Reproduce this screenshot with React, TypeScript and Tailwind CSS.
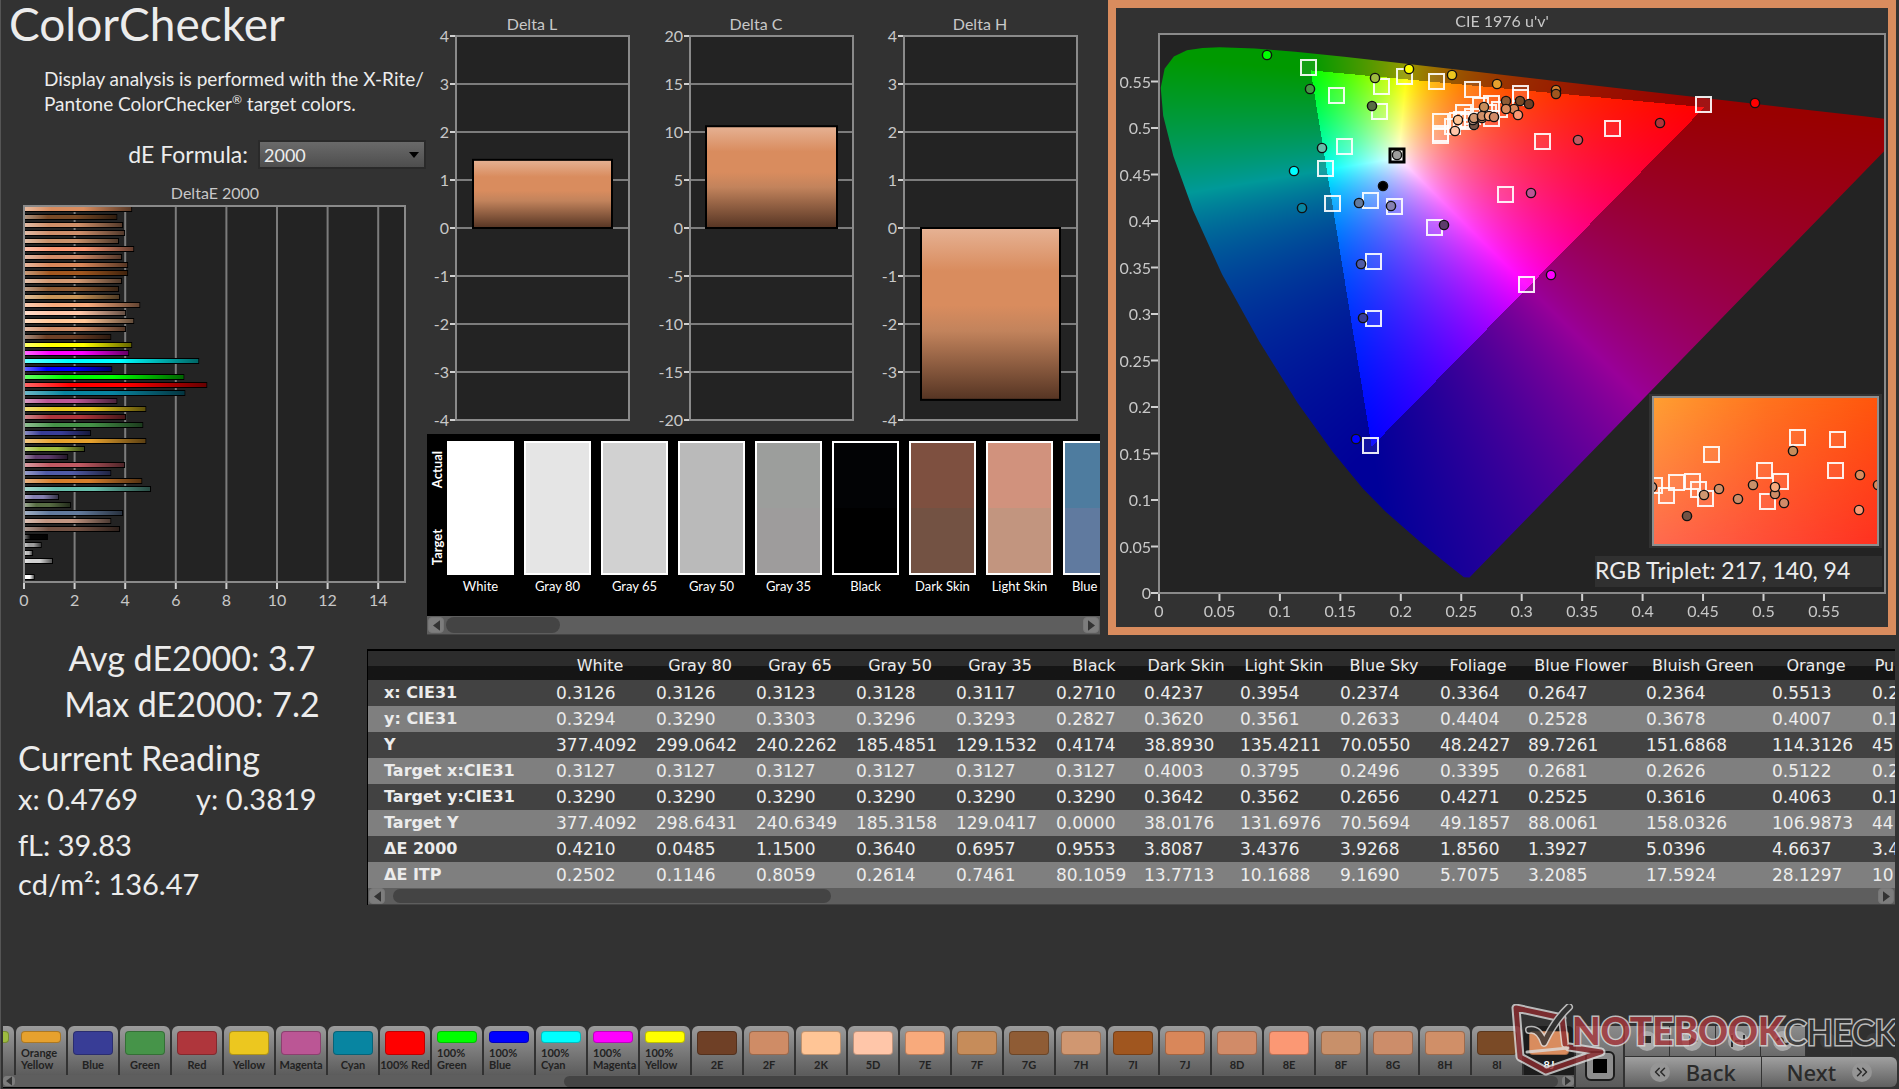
import { useEffect, useRef } from "react";
import { ChevronsLeft, ChevronsRight } from "lucide-react";

const ACCENT = "#d98c5e";

/* ---------- data ---------- */

// top row first
const deltaE: [string, number][] = [
  ["#d98c5e", 4.29], ["#7a4a26", 3.7], ["#d08f68", 3.93], ["#cc8d6a", 4.01], ["#c8906a", 3.77],
  ["#fb9874", 4.37], ["#d18b68", 3.89], ["#d9875a", 4.13], ["#a0561f", 4.13], ["#d09771", 3.89],
  ["#8f5c35", 3.77], ["#c89458", 3.81], ["#f8aa7c", 4.61], ["#ffc6a9", 4.05], ["#ffc596", 4.37],
  ["#cf8c66", 4.05], ["#6f4026", 3.46], ["#ffff00", 4.29], ["#ff00ff", 4.17], ["#00ffff", 6.95],
  ["#0000ff", 3.5], ["#00ff00", 6.36], ["#ff0000", 7.27], ["#0885a1", 6.4], ["#bb5695", 3.7],
  ["#e7c71f", 4.85], ["#af363c", 4.05], ["#469449", 4.73], ["#383d96", 2.66], ["#e6a12e", 4.85],
  ["#9ebc40", 2.42], ["#5e3c6c", 1.75], ["#c15a63", 4.01], ["#505ba6", 3.46], ["#d67e2c", 4.69],
  ["#67bdaa", 5.04], ["#8580b1", 1.39], ["#576c43", 1.86], ["#627a9d", 3.93], ["#c29682", 3.46],
  ["#735244", 3.81], ["#050505", 0.95], ["#9e9e9e", 0.7], ["#bababa", 0.36], ["#d1d1d1", 1.15],
  ["#e5e5e5", 0], ["#ffffff", 0.42],
];

const patches = [
  { name: "White", actual: "#ffffff", target: "#ffffff" },
  { name: "Gray 80", actual: "#e5e5e5", target: "#e5e5e5" },
  { name: "Gray 65", actual: "#d1d1d1", target: "#d1d1d1" },
  { name: "Gray 50", actual: "#bababa", target: "#bababa" },
  { name: "Gray 35", actual: "#9c9e9c", target: "#9e9c9c" },
  { name: "Black", actual: "#020305", target: "#000000" },
  { name: "Dark Skin", actual: "#7e5040", target: "#735243" },
  { name: "Light Skin", actual: "#d1927d", target: "#c2957f" },
  { name: "Blue Sky", actual: "#4e7c9f", target: "#607a9f" },
];

const columns = ["White", "Gray 80", "Gray 65", "Gray 50", "Gray 35", "Black", "Dark Skin", "Light Skin", "Blue Sky", "Foliage", "Blue Flower", "Bluish Green", "Orange", "Purple"];
const columnWidths = [182, 100, 100, 100, 100, 100, 88, 96, 100, 100, 88, 118, 126, 100, 68];

const rows: [string, string[]][] = [
  ["x: CIE31", ["0.3126", "0.3126", "0.3123", "0.3128", "0.3117", "0.2710", "0.4237", "0.3954", "0.2374", "0.3364", "0.2647", "0.2364", "0.5513", "0.2"]],
  ["y: CIE31", ["0.3294", "0.3290", "0.3303", "0.3296", "0.3293", "0.2827", "0.3620", "0.3561", "0.2633", "0.4404", "0.2528", "0.3678", "0.4007", "0.1"]],
  ["Y", ["377.4092", "299.0642", "240.2262", "185.4851", "129.1532", "0.4174", "38.8930", "135.4211", "70.0550", "48.2427", "89.7261", "151.6868", "114.3126", "45"]],
  ["Target x:CIE31", ["0.3127", "0.3127", "0.3127", "0.3127", "0.3127", "0.3127", "0.4003", "0.3795", "0.2496", "0.3395", "0.2681", "0.2626", "0.5122", "0.2"]],
  ["Target y:CIE31", ["0.3290", "0.3290", "0.3290", "0.3290", "0.3290", "0.3290", "0.3642", "0.3562", "0.2656", "0.4271", "0.2525", "0.3616", "0.4063", "0.1"]],
  ["Target Y", ["377.4092", "298.6431", "240.6349", "185.3158", "129.0417", "0.0000", "38.0176", "131.6976", "70.5694", "49.1857", "88.0061", "158.0326", "106.9873", "44"]],
  ["ΔE 2000", ["0.4210", "0.0485", "1.1500", "0.3640", "0.6957", "0.9553", "3.8087", "3.4376", "3.9268", "1.8560", "1.3927", "5.0396", "4.6637", "3.4"]],
  ["ΔE ITP", ["0.2502", "0.1146", "0.8059", "0.2614", "0.7461", "80.1059", "13.7713", "10.1688", "9.1690", "5.7075", "3.2085", "17.5924", "28.1297", "10"]],
];

const tiles: [string, string][] = [
  ["Yellow Green", "#9ebc40"], ["Orange Yellow", "#e6a12e"], ["Blue", "#383d96"], ["Green", "#469449"],
  ["Red", "#af363c"], ["Yellow", "#ecc71f"], ["Magenta", "#bb5695"], ["Cyan", "#0885a1"],
  ["100% Red", "#ff0000"], ["100% Green", "#00ff00"], ["100% Blue", "#0000ff"], ["100% Cyan", "#00ffff"],
  ["100% Magenta", "#ff00ff"], ["100% Yellow", "#ffff00"], ["2E", "#6f4026"], ["2F", "#cf8c66"],
  ["2K", "#ffc596"], ["5D", "#ffc6a9"], ["7E", "#f8aa7c"], ["7F", "#c68c5a"], ["7G", "#8f5c35"],
  ["7H", "#d09771"], ["7I", "#a0561f"], ["7J", "#d9875a"], ["8D", "#d18b68"], ["8E", "#fb9874"],
  ["8F", "#c8906a"], ["8G", "#cc8d6a"], ["8H", "#d08f68"], ["8I", "#7a4a26"], ["8J", ACCENT],
];

// CIE 1931 spectral locus, xy
const locus: [number, number][] = [
  [0.1741, 0.005], [0.1714, 0.0051], [0.1644, 0.0109], [0.1566, 0.0177], [0.144, 0.0297],
  [0.1355, 0.0399], [0.1241, 0.0578], [0.1096, 0.0868], [0.0913, 0.1327], [0.0687, 0.2007],
  [0.0454, 0.295], [0.0235, 0.4127], [0.0082, 0.5384], [0.0039, 0.6548], [0.0139, 0.7502],
  [0.0389, 0.812], [0.0743, 0.8338], [0.1142, 0.8262], [0.1547, 0.8059], [0.2296, 0.7543],
  [0.3016, 0.6923], [0.3731, 0.6245], [0.4441, 0.5547], [0.5125, 0.4866], [0.5752, 0.4242],
  [0.627, 0.3725], [0.6658, 0.334], [0.6915, 0.3083], [0.719, 0.2809], [0.7347, 0.2653],
];

const targets: [number, number][] = [
  [1308, 68], [1336, 96], [1381, 87], [1379, 112], [1404, 77], [1436, 82], [1472, 90], [1344, 147],
  [1325, 169], [1332, 204], [1370, 201], [1394, 207], [1434, 228], [1373, 262], [1373, 319],
  [1505, 195], [1526, 285], [1440, 122], [1440, 134], [1440, 136], [1452, 127], [1457, 121],
  [1463, 113], [1461, 120], [1468, 122], [1472, 117], [1480, 106], [1491, 104], [1491, 119],
  [1488, 113], [1499, 110], [1520, 94], [1520, 98], [1542, 142], [1612, 129], [1703, 105], [1370, 446],
];

const measured: [number, number, string][] = [
  [1267, 56, "#00ff00"], [1310, 90, "#469646"], [1375, 79, "#9ebc40"], [1372, 107, "#576c43"],
  [1409, 70, "#ffff00"], [1452, 76, "#ecc71f"], [1497, 85, "#e6a12e"], [1322, 149, "#67bdaa"],
  [1294, 172, "#00ffff"], [1302, 209, "#0885a1"], [1383, 187, "#000000"], [1359, 204, "#627a9d"],
  [1391, 207, "#8580b1"], [1444, 226, "#5e3c6c"], [1361, 265, "#505ba6"], [1363, 319, "#383d96"],
  [1397, 156, "#9e9e9e"], [1556, 91, "#d67e2c"], [1556, 95, "#a0561f"], [1755, 104, "#ff0000"],
  [1660, 124, "#af363c"], [1578, 141, "#c15a63"], [1531, 194, "#bb5695"], [1551, 276, "#ff00ff"],
  [1356, 440, "#0000ff"], [1506, 102, "#8f5c35"], [1520, 102, "#7a4a26"], [1529, 105, "#6f4026"],
  [1514, 110, "#d9875a"], [1506, 110, "#d98c5e"], [1518, 116, "#fb9874"], [1484, 108, "#c68c5a"],
  [1474, 126, "#735244"], [1473, 121, "#c29682"], [1474, 119, "#d09771"], [1458, 121, "#ffc596"],
  [1455, 132, "#ffc6a9"], [1482, 119, "#c8906a"], [1482, 117, "#d08f68"], [1489, 117, "#f8aa7c"],
  [1494, 118, "#d18b68"],
];

const insetTargets: [number, number][] = [
  [1797, 438], [1837, 440], [1711, 455], [1764, 471], [1835, 471], [1780, 482], [1767, 502],
  [1676, 483], [1692, 482], [1698, 490], [1666, 496], [1705, 499], [1654, 486],
];

const insetMeasured: [number, number, string][] = [
  [1793, 452, "#c68c5a"], [1860, 476, "#d98c5e"], [1753, 486, "#c8906a"], [1775, 495, "#cf8c66"],
  [1775, 488, "#f8aa7c"], [1738, 500, "#cc8d6a"], [1784, 504, "#d18b68"], [1719, 490, "#d08f68"],
  [1704, 496, "#d09771"], [1687, 517, "#735244"], [1859, 511, "#fb9874"], [1878, 486, "#d9875a"],
  [1652, 488, "#c29682"],
];

/* ---------- small parts ---------- */

const arrowBtn =
  "flex h-[16px] w-[16px] shrink-0 items-center justify-center rounded-sm border border-[#777] bg-[#7d7d7d] text-[#333]";

function ScrollBar({ lead, thumb, height }: { lead: string; thumb: string; height: string }) {
  return (
    <div className={`flex items-center border-b border-[#444] bg-[#5e5e5e] px-px ${height}`}>
      <button aria-label="Scroll left" className={arrowBtn}>
        <svg viewBox="0 0 8 12" className="h-[11px] w-[7px]"><path d="M8 0V12L0 6Z" fill="currentColor" /></svg>
      </button>
      <div className="flex h-full flex-1 py-px">
        <div className={lead} />
        <div className={`rounded-lg bg-[#444] ${thumb}`} />
      </div>
      <button aria-label="Scroll right" className={arrowBtn}>
        <svg viewBox="0 0 8 12" className="h-[11px] w-[7px]"><path d="M0 0V12L8 6Z" fill="currentColor" /></svg>
      </button>
    </div>
  );
}

function DeltaEChart() {
  return (
    <svg viewBox="0 0 427 450" className="block w-full text-base">
      <text x="215" y="30" textAnchor="middle" fill="#c8c8c8">DeltaE 2000</text>
      <rect x="24" y="37" width="381" height="376" fill="#232323" />
      {[2, 4, 6, 8, 10, 12, 14].map((t) => (
        <path key={t} d={`M${24 + t * 25.3} 37V413`} stroke="#7c7c7c" strokeWidth="2" />
      ))}
      {deltaE.map(([color, value], i) => (
        <g key={i}>
          <defs>
            <linearGradient id={`bar${i}`}>
              <stop offset="0" stopColor="#fff" stopOpacity=".4" />
              <stop offset=".25" stopColor="#fff" stopOpacity="0" />
              <stop offset=".55" stopColor="#000" stopOpacity="0" />
              <stop offset="1" stopColor="#000" stopOpacity=".6" />
            </linearGradient>
          </defs>
          {value > 0 && (
            <>
              <rect x="24" y={37 + i * 8} width={value * 25.2} height="6" fill="#000" />
              <rect x="25" y={38 + i * 8} width={value * 25.2 - 2} height="4" fill={color} />
              <rect x="25" y={38 + i * 8} width={value * 25.2 - 2} height="4" fill={`url(#bar${i})`} />
            </>
          )}
        </g>
      ))}
      <rect x="24" y="37" width="381" height="376" fill="none" stroke="#8a8a8a" strokeWidth="2" />
      {[0, 2, 4, 6, 8, 10, 12, 14].map((t) => (
        <g key={t}>
          <path d={`M${24 + t * 25.3} 414V420`} stroke="#d0d0d0" strokeWidth="2" />
          <text x={24 + t * 25.3} y="437" textAnchor="middle" fill="#c8c8c8">{t}</text>
        </g>
      ))}
    </svg>
  );
}

function DeltaChart({ name, value, max, axis }: { name: string; value: number; max: number; axis: number }) {
  const step = max / 4;
  const zero = 228;
  const size = (Math.abs(value) / step) * 48;
  const top = value > 0 ? zero - size : zero;
  const width = 195 - axis;
  const inset = Math.round(width * 0.1);
  return (
    <svg viewBox="0 0 196 434" className="block min-w-0 flex-1 text-base">
      <defs>
        <linearGradient id={`delta${max}${axis}`} x1="0" y1="0" x2="0" y2="1">
          <stop offset="0" stopColor="#e6b294" />
          <stop offset=".25" stopColor={ACCENT} />
          <stop offset=".45" stopColor={ACCENT} />
          <stop offset=".6" stopColor="#c2835c" />
          <stop offset="1" stopColor="#553423" />
        </linearGradient>
      </defs>
      <text x="98" y="30" textAnchor="middle" fill="#c8c8c8">{name}</text>
      <rect x={axis} y="36" width={width} height="383" fill="#232323" />
      {[4, 3, 2, 1, 0, -1, -2, -3, -4].map((n, i) => (
        <g key={n}>
          <path d={`M${axis} ${36 + i * 48}H195`} stroke="#7c7c7c" strokeWidth="2" />
          <path d={`M${axis - 6} ${36 + i * 48}H${axis}`} stroke="#d0d0d0" strokeWidth="2" />
          <text x={axis - 7} y={42 + i * 48} textAnchor="end" fill="#c8c8c8">{n * step}</text>
        </g>
      ))}
      <rect x={axis} y="36" width={width} height="384" fill="none" stroke="#8a8a8a" strokeWidth="2" />
      <rect x={axis + inset} y={top} width={width - inset * 2} height={size} fill={`url(#delta${max}${axis})`} stroke="#000" strokeWidth="2" />
    </svg>
  );
}

/* ---------- chromaticity diagram ---------- */

const VIEW = { x: 1116, y: 9, w: 772, h: 619 };
const ORIGIN = { x: 1159, y: 594 };
const PER_U = 1209;
const PER_V = 930;

function paintGamut(canvas: HTMLCanvasElement) {
  const ctx = canvas.getContext("2d");
  if (!ctx) return;
  const img = ctx.createImageData(VIEW.w, VIEW.h);
  for (let py = 0; py < VIEW.h; py++) {
    for (let px = 0; px < VIEW.w; px++) {
      const u = (px + VIEW.x - ORIGIN.x) / PER_U;
      const v = (ORIGIN.y - py - VIEW.y) / PER_V;
      if (v <= 0.001) continue;
      const X = (9 * u) / (4 * v);
      const Z = (12 - 3 * u - 20 * v) / (4 * v);
      const rgb = [
        3.2406 * X - 1.5372 - 0.4986 * Z,
        -0.9689 * X + 1.8758 + 0.0415 * Z,
        0.0557 * X - 0.204 + 1.057 * Z,
      ];
      // outside the triangle the colours are dimmed
      const dim = Math.min(...rgb) < 0 ? 0.6 : 1;
      const peak = Math.max(...rgb);
      const at = (py * VIEW.w + px) * 4;
      rgb.forEach((c, i) => {
        img.data[at + i] = (255 * dim * Math.max(c, 0)) / peak;
      });
      img.data[at + 3] = 255;
    }
  }
  ctx.putImageData(img, 0, 0);

  ctx.globalCompositeOperation = "destination-in";
  ctx.beginPath();
  locus.forEach(([x, y]) => {
    const d = -2 * x + 12 * y + 3;
    ctx.lineTo(ORIGIN.x - VIEW.x + ((4 * x) / d) * PER_U, ORIGIN.y - VIEW.y - ((9 * y) / d) * PER_V);
  });
  ctx.closePath();
  ctx.fill();

  ctx.globalCompositeOperation = "destination-over";
  ctx.fillStyle = "#232323";
  ctx.fillRect(43, 26, 726, 559);
  ctx.clearRect(769, 0, 3, VIEW.h);
}

function Square({ x, y }: { x: number; y: number }) {
  return <rect x={x - 7} y={y - 7} width="15" height="15" fill="#fff" fillOpacity=".08" stroke="#fff" strokeWidth="2" strokeOpacity=".9" />;
}

function Dot({ x, y, color }: { x: number; y: number; color: string }) {
  return <circle cx={x} cy={y} r="4.6" fill={color} stroke="#111" strokeWidth="1.4" />;
}

function CieDiagram() {
  const canvas = useRef<HTMLCanvasElement>(null);
  useEffect(() => {
    if (canvas.current) paintGamut(canvas.current);
  }, []);
  const ticks = [0, 0.05, 0.1, 0.15, 0.2, 0.25, 0.3, 0.35, 0.4, 0.45, 0.5, 0.55];

  return (
    <div className="relative border-8 border-[#d98c5e]">
      <canvas ref={canvas} width={VIEW.w} height={VIEW.h} className="block w-full" />
      <svg viewBox="1116 9 772 619" className="absolute inset-0 w-full text-base">
        <defs>
          <linearGradient id="insetTop">
            <stop offset="0" stopColor="#ffa032" />
            <stop offset=".5" stopColor="#ff741e" />
            <stop offset="1" stopColor="#ff560c" />
          </linearGradient>
          <linearGradient id="insetBottom">
            <stop offset="0" stopColor="#ff6a50" />
            <stop offset="1" stopColor="#ff3020" />
          </linearGradient>
          <linearGradient id="fade" x1="0" y1="0" x2="0" y2="1">
            <stop offset="0" stopColor="#000" />
            <stop offset="1" stopColor="#fff" />
          </linearGradient>
          <mask id="fadeMask"><rect x="1653" y="398" width="225" height="148" fill="url(#fade)" /></mask>
          <clipPath id="insetClip"><rect x="1653" y="398" width="225" height="148" /></clipPath>
        </defs>
        <text x="1502" y="28" textAnchor="middle" fill="#c8c8c8">CIE 1976 u'v'</text>
        <rect x="1159" y="35" width="726" height="559" fill="none" stroke="#8a8a8a" strokeWidth="2" />
        {ticks.map((t) => (
          <g key={t} fill="#c8c8c8">
            <path d={`M${ORIGIN.x + t * PER_U} 595V602`} stroke="#d0d0d0" strokeWidth="2" />
            <text x={ORIGIN.x + t * PER_U} y="618" textAnchor="middle">{t}</text>
            <path d={`M1151 ${ORIGIN.y - t * PER_V}H1158`} stroke="#d0d0d0" strokeWidth="2" />
            <text x="1151" y={ORIGIN.y + 6 - t * PER_V} textAnchor="end">{t}</text>
          </g>
        ))}
        {targets.map(([x, y], i) => <Square key={i} x={x} y={y} />)}
        <rect x="1390" y="150" width="14" height="13" fill="#fff" fillOpacity=".7" stroke="#000" strokeWidth="3" />
        {measured.map(([x, y, c], i) => <Dot key={i} x={x} y={y} color={c} />)}

        <rect x="1649" y="395" width="233" height="154" fill="#323232" />
        <rect x="1653" y="398" width="225" height="148" fill="url(#insetTop)" />
        <rect x="1653" y="398" width="225" height="148" fill="url(#insetBottom)" mask="url(#fadeMask)" />
        <g clipPath="url(#insetClip)">
          {insetTargets.map(([x, y], i) => <Square key={i} x={x} y={y} />)}
          {insetMeasured.map(([x, y, c], i) => <Dot key={i} x={x} y={y} color={c} />)}
        </g>
        <rect x="1653" y="398" width="225" height="148" fill="none" stroke="#8f8f8f" strokeWidth="2" />
        <rect x="1595" y="557" width="287" height="31" fill="#303030" />
        <text x="1595" y="580" fill="#ececec" className="text-[23px]">RGB Triplet: 217, 140, 94</text>
      </svg>
    </div>
  );
}

/* ---------- panels ---------- */

function PatchPanel() {
  return (
    <div className="flex flex-col">
      <div className="flex h-[182px] overflow-hidden bg-black pt-[7px] text-white">
        <div className="flex h-[134px] w-[20px] shrink-0 flex-col items-center justify-between py-[10px] pl-px text-[13px] font-bold leading-none">
          <span className="rotate-180 [writing-mode:vertical-rl]">Actual</span>
          <span className="rotate-180 [writing-mode:vertical-rl]">Target</span>
        </div>
        <div className="flex gap-[10px]">
          {patches.map((p) => (
            <figure key={p.name} className="w-[67px] shrink-0 text-center">
              <div className="flex h-[134px] flex-col border-2 border-white">
                <div className="flex-1" style={{ background: p.actual }} />
                <div className="flex-1" style={{ background: p.target }} />
              </div>
              <figcaption className="mt-[3px] whitespace-nowrap text-[13px] leading-4">{p.name}</figcaption>
            </figure>
          ))}
        </div>
      </div>
      <ScrollBar height="h-[19px]" lead="w-[2px]" thumb="w-[114px]" />
    </div>
  );
}

function Readings() {
  return (
    <section className="w-[366px] shrink-0 whitespace-nowrap text-[29px] leading-9">
      <div className="pl-4 text-center text-[34px] leading-[46px]">
        <p>Avg dE2000: 3.7</p>
        <p>Max dE2000: 7.2</p>
      </div>
      <div className="pl-[17px]">
        <h2 className="mt-2 text-[34px] leading-[46px]">Current Reading</h2>
        <p className="flex gap-[58px]">
          <span>x: 0.4769</span>
          <span>y: 0.3819</span>
        </p>
        <p className="mt-[10px]">fL: 39.83</p>
        <p className="mt-[3px]">cd/m²: 136.47</p>
      </div>
    </section>
  );
}

function ResultsTable() {
  return (
    <section className="mt-[14px] mr-1 min-w-0 flex-1 border-l border-t-2 border-black">
      <div className="overflow-hidden">
        <table className="w-[1566px] table-fixed border-collapse whitespace-nowrap font-['DejaVu_Sans',sans-serif] text-[17px]">
          <colgroup>
            {columnWidths.map((w, i) => <col key={i} style={{ width: w }} />)}
          </colgroup>
          <thead>
            <tr className="h-[29px] bg-linear-to-b from-[#2c2c2c] from-50% to-[#151515] to-50% text-[16px]">
              <td />
              {columns.map((c) => <th key={c} scope="col" className="p-0 font-normal">{c}</th>)}
            </tr>
          </thead>
          <tbody>
            {rows.map(([name, values]) => (
              <tr key={name} className="h-[26px] leading-6 odd:bg-[#424242] even:bg-[#7f7f7f]">
                <th scope="row" className="p-0 pl-4 text-left text-[16px] font-bold">{name}</th>
                {values.map((v, i) => <td key={i} className="p-0 pl-[6px]">{v}</td>)}
              </tr>
            ))}
          </tbody>
        </table>
      </div>
      <ScrollBar height="h-[17px]" lead="w-[8px]" thumb="w-[438px]" />
    </section>
  );
}

function Tile({ name, color, active }: { name: string; color: string; active: boolean }) {
  const two = name.includes(" ") && name !== "100% Red";
  return (
    <button
      className={`flex h-[49px] w-[50px] shrink-0 flex-col items-center justify-between rounded-t-md pb-1 pt-[5px] text-[11px] font-bold leading-3 ${
        active ? "bg-[#1c1c1c] text-white" : "bg-linear-to-b from-[#9c9c9c] to-[#5c5c5c] text-[#222]"
      }`}
    >
      <span className={`w-10 rounded-sm border border-black/25 ${two ? "h-3" : "h-6"}`} style={{ background: color }} />
      <span className={two ? "w-10 text-left" : "whitespace-nowrap"}>{name}</span>
    </button>
  );
}

function Watermark() {
  return (
    <svg viewBox="0 0 384 74" className="pointer-events-none absolute -top-[22px] left-[1510px] w-[384px] opacity-80" aria-label="Notebookcheck">
      <g strokeLinejoin="round" strokeLinecap="round" fill="none">
        <path d="M5 4L51 14 M5 4L9 53L35 67L90 48L58 43" stroke="#ddd" strokeWidth="9" />
        <path d="M51 14L54 40" stroke="#ddd" strokeWidth="8" />
        <path d="M5 4L51 14L54 40 M5 4L9 53L35 67L90 48L58 43" stroke="#8c2b2f" strokeWidth="5" />
        <path d="M18 26Q28 24 33 39Q44 16 58 3" stroke="#ddd" strokeWidth="8" />
        <path d="M18 26Q28 24 33 39Q44 16 58 3" stroke="#333" strokeWidth="5" />
        <path d="M16 48L57 44" stroke="#ddd" strokeWidth="3" />
      </g>
      <g stroke="#ddd" strokeWidth="3" paintOrder="stroke">
        <text x="61" y="41" className="text-[37px] font-black" fill="#a8383d">NOTEBOOK</text>
        <text x="273" y="41" className="text-[34px] font-medium" fill="#333">CHECK</text>
      </g>
    </svg>
  );
}

const deckBtn = "flex flex-1 items-center justify-center border-r border-[#333]";

function BottomBar() {
  return (
    <footer className="relative mt-auto flex h-[63px] gap-[2px] pl-[2px] pr-[2px]">
      <div className="min-w-0 flex-1 overflow-hidden">
        <div className="-ml-[39px] flex gap-[2px]">
          {tiles.map(([name, color], i) => (
            <Tile key={name} name={name} color={color} active={i === tiles.length - 1} />
          ))}
        </div>
        <div className="flex h-[13px] items-center border-b border-black bg-[#5e5e5e]">
          <button aria-label="Scroll left" className="flex w-3 justify-center rounded-sm bg-[#7d7d7d] text-[#333]">
            <svg viewBox="0 0 8 12" className="h-[10px] w-[6px]"><path d="M8 0V12L0 6Z" fill="currentColor" /></svg>
          </button>
          <div className="ml-auto h-[11px] w-[994px] rounded-md bg-[#444]" />
          <button aria-label="Scroll right" className="ml-1 flex w-3 justify-center rounded-sm bg-[#7d7d7d] text-[#333]">
            <svg viewBox="0 0 8 12" className="h-[10px] w-[6px]"><path d="M0 0V12L8 6Z" fill="currentColor" /></svg>
          </button>
        </div>
      </div>
      <button aria-label="Stop" className="flex h-[61px] w-[47px] items-end justify-center bg-linear-to-b from-[#8a8a8a] to-[#5a5a5a] pb-[6px]">
        <span className="flex h-[30px] w-[30px] items-center justify-center rounded-md border-2 border-[#1c1c1c] bg-[#8d8d8d]">
          <span className="h-[14px] w-[14px] bg-black" />
        </span>
      </button>
      <div className="flex h-[61px] w-[272px] flex-col gap-px text-[#2a2a2a]">
        <div className="flex h-[30px] bg-linear-to-b from-[#8c8c8c] to-[#6a6a6a]">
          <button aria-label="Halt" className={deckBtn}>
            <svg viewBox="0 0 20 20" className="h-5 w-5"><circle cx="10" cy="10" r="10" fill="#a8a8a8" /><path d="M6 5H14V12H6Z" fill="#2a2a2a" /></svg>
          </button>
          <button aria-label="Play" className={deckBtn}>
            <svg viewBox="0 0 20 20" className="h-5 w-5"><circle cx="10" cy="10" r="10" fill="#a8a8a8" /><path d="M7 5L16 10L7 15Z" fill="#2a2a2a" /></svg>
          </button>
          <button aria-label="Step" className={deckBtn}>
            <svg viewBox="0 0 20 20" className="h-5 w-5"><circle cx="10" cy="10" r="10" fill="#a8a8a8" /><path d="M4 4V16M16 4V16M7 10H13" stroke="#2a2a2a" strokeWidth="2" /></svg>
          </button>
          <button aria-label="Loop" className={deckBtn}>
            <svg viewBox="0 0 20 20" className="h-5 w-5"><circle cx="10" cy="10" r="10" fill="#a8a8a8" /><path d="M4 10a3 3 0 0 1 6 0a3 3 0 0 0 6 0" fill="none" stroke="#2a2a2a" strokeWidth="2" /></svg>
          </button>
          <button aria-label="Refresh" className={`bg-[#303030] ${deckBtn}`}><span className="h-4 w-4 rounded-full bg-[#3c3c3c]" /></button>
          <button aria-label="Record" className={`bg-[#303030] ${deckBtn}`}><span className="h-4 w-4 rounded-full bg-[#3c3c3c]" /></button>
        </div>
        <div className="flex h-[30px] text-[22px] font-['Noto_Sans',sans-serif] font-medium leading-7">
          <button className="flex flex-1 items-center justify-center gap-4 border-r border-[#333] bg-linear-to-b from-[#a0a0a0] to-[#606060]">
            <span className="rounded-full bg-[#959595] p-px"><ChevronsLeft size={18} /></span>
            Back
          </button>
          <button className="flex flex-1 items-center justify-center gap-4 rounded-r-md bg-linear-to-b from-[#a0a0a0] to-[#606060]">
            Next
            <span className="rounded-full bg-[#959595] p-px"><ChevronsRight size={18} /></span>
          </button>
        </div>
      </div>
      <Watermark />
    </footer>
  );
}

export default function App() {
  return (
    <main className="flex min-h-screen flex-col overflow-hidden border-l border-[#555] bg-[#323232] font-['Lato',sans-serif] text-[#ececec]">
      <div className="-ml-px grid grid-cols-[427fr_681fr_791fr]">
        <section className="min-w-0">
          <h1 className="pl-[9px] text-[46px] leading-[47px]">ColorChecker</h1>
          <p className="mt-[19px] whitespace-nowrap pl-11 text-[19px] leading-[25px]">
            Display analysis is performed with the X-Rite/
            <br />
            Pantone ColorChecker<span className="align-super text-[12px] leading-none">®</span> target colors.
          </p>
          <div className="mt-6 flex h-[29px] items-center justify-end gap-[10px] pr-px">
            <label htmlFor="formula" className="text-[23px]">dE Formula:</label>
            <div className="relative">
              <select id="formula" className="block h-[29px] w-[168px] appearance-none border-2 border-[#2a2a2a] bg-linear-to-b from-[#6a6a6a] to-[#4e4e4e] pl-1 text-[18px] leading-6">
                <option>2000</option>
              </select>
              <svg viewBox="0 0 10 6" className="pointer-events-none absolute right-[7px] top-3 h-[6px] w-[10px]"><path d="M0 0H10L5 6Z" fill="#000" /></svg>
            </div>
          </div>
          <DeltaEChart />
        </section>

        <section className="min-w-0 pr-2">
          <div className="flex gap-7 pl-[7px] pr-[22px]">
            <DeltaChart name="Delta L" value={1.42} max={4} axis={22} />
            <DeltaChart name="Delta C" value={10.6} max={20} axis={32} />
            <DeltaChart name="Delta H" value={-3.58} max={4} axis={22} />
          </div>
          <PatchPanel />
        </section>

        <section className="min-w-0 pr-[3px]">
          <CieDiagram />
        </section>
      </div>

      <div className="flex">
        <Readings />
        <ResultsTable />
      </div>

      <BottomBar />
    </main>
  );
}
